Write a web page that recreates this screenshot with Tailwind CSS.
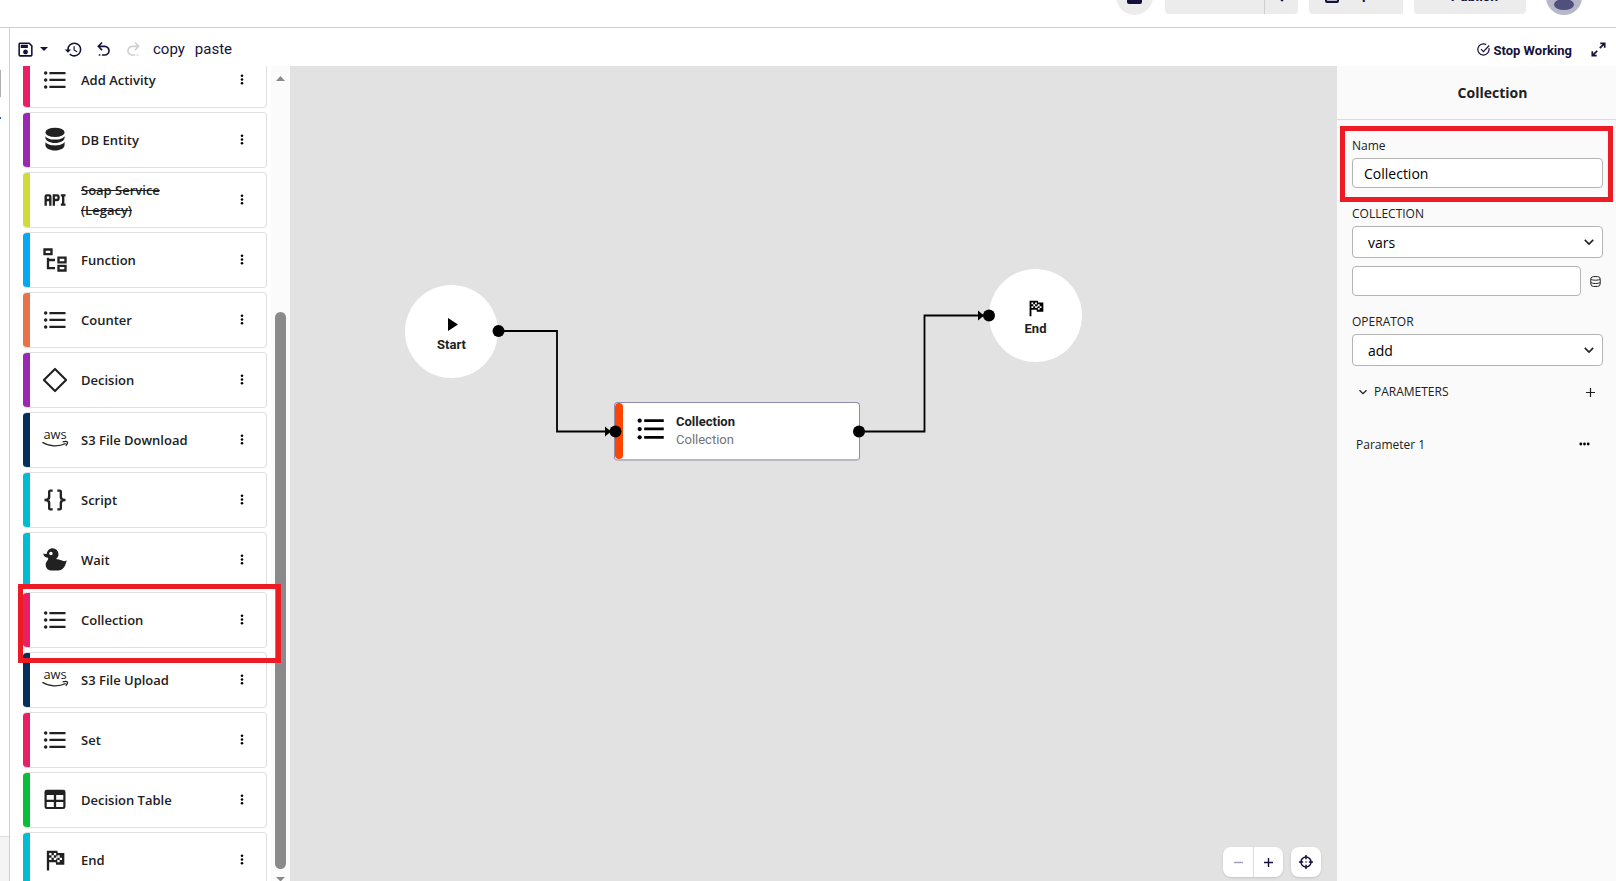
<!DOCTYPE html>
<html lang="en">
<head>
<meta charset="utf-8">
<title>Workflow editor</title>
<script src="https://cdn.jsdelivr.net/npm/@tailwindcss/browser@4"></script>
</head>
<body class="flex h-screen flex-col overflow-hidden bg-white font-['Open_Sans','Noto_Sans',sans-serif] text-[#212121]">

<svg class="hidden" aria-hidden="true">
  <symbol id="list" viewBox="0 0 24 24"><path d="M7.200 5.100H21V7H7.200zM7.200 11H21V12.900H7.200zM7.200 16.900H21V18.800H7.200z"/><circle cx="4" cy="6.100" r="1.500"/><circle cx="4" cy="12" r="1.500"/><circle cx="4" cy="17.900" r="1.500"/></symbol>
  <symbol id="db" viewBox="0 0 24 24"><ellipse cx="12" cy="5.500" rx="8.200" ry="4"/><path d="M3.800 8.500C5 10.700 8.200 11.600 12 11.600s7-.9 8.200-3.100v1.600c0 2.500-3.700 4.500-8.200 4.500s-8.200-2-8.200-4.500zM3.800 13.600C5 15.800 8.200 16.700 12 16.700s7-.9 8.200-3.100v2.900c0 2.500-3.700 4.500-8.200 4.500s-8.200-2-8.200-4.500z"/></symbol>
  <symbol id="api" viewBox="0 0 24 24"><path d="M7 7H5A2 2 0 0 0 3 9V17H5V13H7V17H9V9A2 2 0 0 0 7 7M7 11H5V9H7M14 7H10V17H12V13H14A2 2 0 0 0 16 11V9A2 2 0 0 0 14 7M14 11H12V9H14M20 9V15H21V17H17V15H18V9H17V7H21V9Z"/></symbol>
  <symbol id="tree" viewBox="0 0 24 24"><path d="M12 13H7V18H12V20H5V10H7V11H12V13M8 4V6H4V4H8M10 2H2V8H10V2M20 11V13H16V11H20M22 9H14V15H22V9M20 18V20H16V18H20M22 16H14V22H22V16Z"/></symbol>
  <symbol id="diamond" viewBox="0 0 24 24"><path d="M12 2.500 21.500 12 12 21.500 2.500 12z" fill="none" stroke="currentColor" stroke-width="1.800" stroke-linejoin="round"/></symbol>
  <symbol id="aws" viewBox="0 0 24 24"><text x="12" y="11.500" font-family="Open Sans, sans-serif" font-size="11" font-weight="400" text-anchor="middle">aws</text><path d="M1.200 14c5.500 3.600 14 4 20 1M18.500 13.600c1.800-.5 3.600-.5 4 0s-.2 2.200-1.300 3.300" fill="none" stroke="currentColor" stroke-width="1.100"/></symbol>
  <symbol id="braces" viewBox="0 0 24 24"><path d="M8,3A2,2 0 0,0 6,5V9A2,2 0 0,1 4,11H3V13H4A2,2 0 0,1 6,15V19A2,2 0 0,0 8,21H10V19H8V14A2,2 0 0,0 6,12A2,2 0 0,0 8,10V5H10V3M16,3A2,2 0 0,1 18,5V9A2,2 0 0,0 20,11H21V13H20A2,2 0 0,0 18,15V19A2,2 0 0,1 16,21H14V19H16V14A2,2 0 0,1 18,12A2,2 0 0,1 16,10V5H14V3H16Z"/></symbol>
  <symbol id="duck" viewBox="0 0 24 24"><path d="M8.500,5A1.500,1.500 0 0,0 7,6.500A1.500,1.500 0 0,0 8.500,8A1.500,1.500 0 0,0 10,6.500A1.500,1.500 0 0,0 8.500,5M10,2A5,5 0 0,1 15,7C15,8.700 14.150,10.200 12.860,11.100C14.440,11.250 16.220,11.610 18,12.500C21,14 22,12 22,12C22,12 21,21 15,21H9C9,21 4,21 4,16C4,13 7,12 6,10C2,10 2,6.500 2,6.500C3,7 4.240,7 5,6.650C5.190,4.050 7.360,2 10,2Z"/></symbol>
  <symbol id="table" viewBox="0 0 24 24"><path fill-rule="evenodd" d="M5 3.200h14a2 2 0 0 1 2 2v12.600a2 2 0 0 1-2 2H5a2 2 0 0 1-2-2V5.200a2 2 0 0 1 2-2zM4.900 7.800v3.900h6.100V7.800zM13 7.800v3.900h6.100V7.800zM4.900 13.700v4.200h6.100v-4.200zM13 13.700v4.200h6.100v-4.200z"/></symbol>
  <symbol id="flag" viewBox="0 0 24 24"><path d="M14.400,6H20V16H13L12.600,14H7V21H5V4H14L14.400,6M14,14H16V12H18V10H16V8H14V10L13,8V6H11V8H9V6H7V8H9V10H7V12H9V10H11V12H13V10L14,12V14M11,10V8H13V10H11M14,10H16V12H14V10Z"/></symbol>
  <symbol id="dots" viewBox="0 0 4 12"><circle cx="2" cy="2" r="1.400"/><circle cx="2" cy="6" r="1.400"/><circle cx="2" cy="10" r="1.400"/></symbol>
  <symbol id="chevron" viewBox="0 0 10 10"><path d="M1.500 3.200 5 6.700l3.500-3.500" fill="none" stroke="currentColor" stroke-width="1.300"/></symbol>
</svg>

<header class="flex h-7 shrink-0 items-end justify-end gap-[11px] overflow-hidden border-b border-[#cfcfcf] pr-[34px] pb-[13px] font-[Roboto,sans-serif] text-sm font-bold text-[#14123a]">
  <button aria-label="Apps" class="-mb-px flex size-[37px] items-center justify-center rounded-full bg-[#ececec]"><span class="size-[15px] rounded-xs bg-[#14123a]"></span></button>
  <div class="ml-px flex h-9 rounded bg-[#ececec]">
    <button aria-label="Run" disabled class="w-[100px] border-r border-[#cfcfcf]"></button>
    <button aria-label="More" class="flex w-[33px] items-center justify-center"><svg class="h-3 w-1" fill="currentColor"><use href="#dots"/></svg></button>
  </div>
  <button class="flex h-9 w-[94px] items-center gap-2 rounded-l bg-[#ececec] pb-1 pl-4"><span class="mt-1 size-[14px] rounded-xs border-2 border-current bg-[#b8b8c8]"></span>Export</button>
  <button class="flex h-9 w-28 items-center justify-end rounded bg-[#ececec] pr-7">Publish</button>
  <button aria-label="Account" class="-mb-px ml-[9px] size-9 overflow-hidden rounded-full"><svg viewBox="0 0 36 36"><rect width="36" height="36" fill="#b7b7cc"/><circle cx="18" cy="13" r="6" fill="#50507c"/><ellipse cx="18" cy="25.500" rx="10" ry="5.500" fill="#50507c"/></svg></button>
</header>

<div class="flex min-h-0 flex-1">
  <div class="flex w-[10px] shrink-0 flex-col border-r border-[#cfcfcf]">
    <span class="mt-[42px] h-[27px] w-px bg-[#b0b0b0]"></span>
    <span class="mt-5 h-[2px] w-px bg-[#1a56b8]"></span>
    <span class="mt-auto h-[45px] border-t border-[#dcdcdc] bg-[#f4f4f4]"></span>
  </div>

  <div class="flex min-w-0 flex-1 flex-col">
    <div class="flex h-[38px] shrink-0 items-center pt-1 pr-[9px] pl-[6px] font-[Roboto,sans-serif] text-[15px] text-[#14123a]">
      <button aria-label="Save"><svg class="size-[19px]" viewBox="0 0 24 24" fill="currentColor"><path d="M17 3H5C3.890 3 3 3.900 3 5V19C3 20.100 3.890 21 5 21H19C20.100 21 21 20.100 21 19V7L17 3M19 19H5V5H16.170L19 7.830V19M12 12C10.340 12 9 13.340 9 15S10.340 18 12 18 15 16.660 15 15 13.660 12 12 12M6 6H15V10H6V6Z"/></svg></button>
      <button aria-label="Save options" class="ml-[5px]"><svg class="h-1 w-2" viewBox="0 0 8 4" fill="currentColor"><path d="M0 0h8L4 4z"/></svg></button>
      <button aria-label="History" class="ml-4"><svg class="size-[19px]" viewBox="0 0 24 24" fill="currentColor"><path d="M13.500,8H12V13L16.280,15.540L17,14.330L13.500,12.250V8M13,3A9,9 0 0,0 4,12H1L4.960,16.030L9,12H6A7,7 0 0,1 13,5A7,7 0 0,1 20,12A7,7 0 0,1 13,19C11.070,19 9.320,18.210 8.060,16.940L6.640,18.360C8.270,20 10.500,21 13,21A9,9 0 0,0 22,12A9,9 0 0,0 13,3"/></svg></button>
      <button aria-label="Undo" class="ml-[11px]"><svg class="size-[19px]" viewBox="0 0 24 24" fill="currentColor"><path d="M13.500,7A6.500,6.500 0 0,1 20,13.500A6.500,6.500 0 0,1 13.500,20H10V18H13.500C16,18 18,16 18,13.500C18,11 16,9 13.500,9H7.830L10.910,12.090L9.500,13.500L4,8L9.500,2.500L10.920,3.910L7.830,7H13.500M6,18H8V20H6V18Z"/></svg></button>
      <button aria-label="Redo" disabled class="ml-[11px] text-[#cfcfcf]"><svg class="size-[19px]" viewBox="0 0 24 24" fill="currentColor"><path d="M10.500,7A6.500,6.500 0 0,0 4,13.500A6.500,6.500 0 0,0 10.500,20H14V18H10.500C8,18 6,16 6,13.500C6,11 8,9 10.500,9H16.170L13.090,12.090L14.500,13.500L20,8L14.500,2.500L13.080,3.910L16.170,7H10.500M18,18H16V20H18V18Z"/></svg></button>
      <button class="ml-[10px]">copy</button>
      <button class="ml-[10px]">paste</button>
      <button class="ml-auto flex items-center gap-1 pt-[3px] text-[13px] font-bold"><svg class="-mt-[2px] size-[13px]" viewBox="0 0 13 13" fill="none" stroke="currentColor" stroke-width="1.200"><path d="M11.900 5.200A5.600 5.600 0 1 1 9.200 1.600M4 6.200l2.400 2.400L12.200 2.500"/></svg>Stop Working</button>
      <button aria-label="Expand" class="ml-[18px]"><svg class="size-[17px]" viewBox="0 0 17 17" fill="none" stroke="currentColor" stroke-width="1.700"><path d="M10.300 2.300h4.400v4.400M14.400 2.600 9.800 7.200M6.700 14.700H2.300v-4.400M2.600 14.400 7.200 9.800"/></svg></button>
    </div>

    <div class="flex min-h-0 flex-1">
      <aside class="relative flex w-[280px] shrink-0">
        <div class="min-w-0 flex-1 overflow-hidden pr-1 pl-[13px]">
          <ul class="-mt-[14px] flex flex-col gap-1 text-[13px] leading-5 font-semibold [&>li]:flex [&>li]:h-14 [&>li]:items-center [&>li]:overflow-hidden [&>li]:rounded [&>li]:border [&>li]:border-l-0 [&>li]:border-[#e0e0e0] [&>li>i]:h-14 [&>li>i]:w-[7px] [&>li>i]:shrink-0 [&>li>svg]:mb-px [&>li>svg]:ml-[11px] [&>li>svg]:size-7 [&>li>svg]:shrink-0 [&>li>svg]:fill-current [&>li>span]:ml-3 [&>li>span]:w-[120px] [&>li>span]:whitespace-nowrap [&>li>button]:mr-[22px] [&>li>button]:mb-px [&>li>button]:ml-auto [&_button>svg]:h-[11px] [&_button>svg]:w-1">
            <li><i class="bg-[#e91e63]"></i><svg><use href="#list"/></svg><span>Add Activity</span><button aria-label="Add Activity menu"><svg><use href="#dots"/></svg></button></li>
            <li><i class="bg-[#9c27b0]"></i><svg><use href="#db"/></svg><span>DB Entity</span><button aria-label="DB Entity menu"><svg><use href="#dots"/></svg></button></li>
            <li><i class="bg-[#cddc39]"></i><svg><use href="#api"/></svg><span class="line-through">Soap Service<br>(Legacy)</span><button aria-label="Soap Service menu"><svg><use href="#dots"/></svg></button></li>
            <li><i class="bg-[#03a9f4]"></i><svg><use href="#tree"/></svg><span>Function</span><button aria-label="Function menu"><svg><use href="#dots"/></svg></button></li>
            <li><i class="bg-[#e8734a]"></i><svg><use href="#list"/></svg><span>Counter</span><button aria-label="Counter menu"><svg><use href="#dots"/></svg></button></li>
            <li><i class="bg-[#9c27b0]"></i><svg><use href="#diamond"/></svg><span>Decision</span><button aria-label="Decision menu"><svg><use href="#dots"/></svg></button></li>
            <li><i class="bg-[#05305c]"></i><svg><use href="#aws"/></svg><span>S3 File Download</span><button aria-label="S3 File Download menu"><svg><use href="#dots"/></svg></button></li>
            <li><i class="bg-[#00bcd4]"></i><svg><use href="#braces"/></svg><span>Script</span><button aria-label="Script menu"><svg><use href="#dots"/></svg></button></li>
            <li><i class="bg-[#00bcd4]"></i><svg><use href="#duck"/></svg><span>Wait</span><button aria-label="Wait menu"><svg><use href="#dots"/></svg></button></li>
            <li><i class="bg-[#e91e63]"></i><svg><use href="#list"/></svg><span>Collection</span><button aria-label="Collection menu"><svg><use href="#dots"/></svg></button></li>
            <li><i class="bg-[#05305c]"></i><svg><use href="#aws"/></svg><span>S3 File Upload</span><button aria-label="S3 File Upload menu"><svg><use href="#dots"/></svg></button></li>
            <li><i class="bg-[#e91e63]"></i><svg><use href="#list"/></svg><span>Set</span><button aria-label="Set menu"><svg><use href="#dots"/></svg></button></li>
            <li><i class="bg-[#08bf3a]"></i><svg><use href="#table"/></svg><span>Decision Table</span><button aria-label="Decision Table menu"><svg><use href="#dots"/></svg></button></li>
            <li><i class="bg-[#00bcd4]"></i><svg><use href="#flag"/></svg><span>End</span><button aria-label="End menu"><svg><use href="#dots"/></svg></button></li>
          </ul>
        </div>
        <div class="flex w-[19px] shrink-0 flex-col items-center bg-[#fbfbfb] pt-[10px]">
          <svg class="h-[5px] w-[9px] shrink-0" viewBox="0 0 9 5" fill="#8a8a8a"><path d="M4.500 0 9 5H0z"/></svg>
          <span class="mt-auto h-[557px] w-[11px] shrink-0 rounded-full bg-[#8a8a8a]"></span>
          <svg class="mt-2 h-1 w-[9px] shrink-0" viewBox="0 0 9 4" fill="#8a8a8a"><path d="M0 0h9L5 4H4z"/></svg>
        </div>
        <div class="pointer-events-none absolute top-[518px] left-2 h-[79px] w-[263px] border-5 border-[#ed1c24]"></div>
      </aside>

      <main class="relative min-w-0 flex-1 overflow-hidden bg-[#e2e2e2] font-[Roboto,sans-serif] text-[13px]">
        <div class="absolute top-[219px] left-[115px] flex size-[93px] flex-col items-center justify-center gap-1 rounded-full bg-white pt-[10px] font-bold">
          <svg class="ml-[2px] h-[13px] w-[10px]" viewBox="0 0 10 13" fill="#000"><path d="M0 0 10 6.500 0 13z"/></svg>
          <span>Start</span>
        </div>
        <div class="absolute top-[336px] left-[324px] flex h-[59px] w-[246px] items-center rounded border border-b-2 border-[#8f8dae] border-b-[#b9b9c6] bg-white">
          <span class="h-14 w-2 shrink-0 rounded-full bg-[#ff4500]"></span>
          <svg class="mb-1 ml-[11px] size-[34px] shrink-0" viewBox="0 0 24 24" fill="#000"><use href="#list"/></svg>
          <div class="ml-2 leading-[18px]"><div class="font-bold">Collection</div><div class="text-[#757575]">Collection</div></div>
        </div>
        <div class="absolute top-[203px] left-[699px] flex size-[93px] flex-col items-center justify-center rounded-full bg-white pt-1 font-bold">
          <svg class="size-[22px]" fill="#000"><use href="#flag"/></svg>
          <span>End</span>
        </div>
        <svg class="pointer-events-none absolute top-0 left-0 h-[420px] w-[800px]" viewBox="0 0 800 420">
          <path d="M208 265H267V365.500H325M569 365.500H634.500V249.500H698" fill="none" stroke="#000" stroke-width="1.800"/>
          <path d="M315 360.500 321 365.500 315 370.500zM688 244.500 694 249.500 688 254.500z"/>
          <circle cx="208.500" cy="265" r="6"/><circle cx="325.500" cy="365.500" r="6"/><circle cx="569" cy="365.500" r="6"/><circle cx="699" cy="249.500" r="6"/>
        </svg>
        <div class="absolute right-4 bottom-1 flex gap-2 text-[#14123a]">
          <div class="flex h-[30px] rounded-lg bg-white shadow">
            <button aria-label="Zoom out" class="flex w-[31px] items-center justify-center border-r border-[#dcdcdc]"><svg class="size-[9px]" viewBox="0 0 9 9"><path d="M0 4.500h9" stroke="#a1a0b4" stroke-width="1.500"/></svg></button>
            <button aria-label="Zoom in" class="flex w-[29px] items-center justify-center"><svg class="size-[9px]" viewBox="0 0 9 9"><path d="M0 4.500h9M4.500 0v9" stroke="currentColor" stroke-width="1.400"/></svg></button>
          </div>
          <button aria-label="Center" class="flex size-[30px] items-center justify-center rounded-lg bg-white shadow"><svg class="size-[14px]" viewBox="0 0 15 15" fill="none" stroke="currentColor" stroke-width="1.600"><circle cx="7.500" cy="7.500" r="5.400"/><path d="M7.500 0v4.500M7.500 10.500V15M0 7.500h4.500M10.500 7.500H15"/><circle cx="7.500" cy="7.500" r=".6" stroke-width=".6"/></svg></button>
        </div>
      </main>

      <aside class="flex w-[279px] shrink-0 flex-col bg-[#fafafa] text-[12px] leading-4">
        <h2 class="flex h-[54px] shrink-0 items-center justify-center border-b border-[#dcdcdc] pl-8 text-sm font-bold">Collection</h2>
        <form class="flex flex-col px-[15px] pr-[13px]">
          <div class="relative mt-[18px] flex flex-col gap-1">
            <label for="name">Name</label>
            <input id="name" value="Collection" class="h-[30px] rounded border border-[#b5b5b5] bg-white px-[11px] text-sm text-black">
            <div class="pointer-events-none absolute -top-3 -right-[10px] -bottom-[14px] -left-3 border-5 border-[#ed1c24]"></div>
          </div>
          <label for="collection" class="mt-[18px]">COLLECTION</label>
          <div class="relative mt-1">
            <select id="collection" class="h-8 w-full appearance-none rounded border border-[#b5b5b5] bg-white px-[15px] pt-px text-sm text-black"><option>vars</option></select>
            <svg class="pointer-events-none absolute top-[10px] right-2 size-3"><use href="#chevron"/></svg>
          </div>
          <div class="mt-2 flex items-center gap-[9px]">
            <input aria-label="Variable path" class="h-[30px] min-w-0 flex-1 rounded border border-[#b5b5b5] bg-white px-[11px] text-sm">
            <button type="button" aria-label="Pick variable" class="mr-[2px]"><svg class="size-[11px]" viewBox="0 0 11 11" fill="none" stroke="currentColor"><rect x=".8" y=".6" width="9.400" height="9.800" rx="2.600"/><path d="M.8 3c1 1.600 8.400 1.600 9.400 0M.8 6.300c1 1.600 8.400 1.600 9.400 0"/></svg></button>
          </div>
          <label for="operator" class="mt-[18px]">OPERATOR</label>
          <div class="relative mt-1">
            <select id="operator" class="h-8 w-full appearance-none rounded border border-[#b5b5b5] bg-white px-[15px] pt-px text-sm text-black"><option>add</option></select>
            <svg class="pointer-events-none absolute top-[10px] right-2 size-3"><use href="#chevron"/></svg>
          </div>
          <div class="mt-[18px] flex items-center pr-2 pl-[6px]">
            <button type="button" class="flex items-center gap-[6px]"><svg class="size-[10px]"><use href="#chevron"/></svg>PARAMETERS</button>
            <button type="button" aria-label="Add parameter" class="ml-auto"><svg class="size-[9px]" viewBox="0 0 9 9"><path d="M0 4.500h9M4.500 0v9" stroke="currentColor" stroke-width="1.200"/></svg></button>
          </div>
          <div class="mt-[37px] flex items-center pr-[13px] pl-1">
            <span>Parameter 1</span>
            <button type="button" aria-label="Parameter 1 menu" class="mb-[2px] ml-auto"><svg class="h-1 w-[11px]" viewBox="0 0 11 4" fill="#000"><circle cx="1.800" cy="2" r="1.400"/><circle cx="5.500" cy="2" r="1.400"/><circle cx="9.200" cy="2" r="1.400"/></svg></button>
          </div>
        </form>
      </aside>
    </div>
  </div>
</div>
</body>
</html>
